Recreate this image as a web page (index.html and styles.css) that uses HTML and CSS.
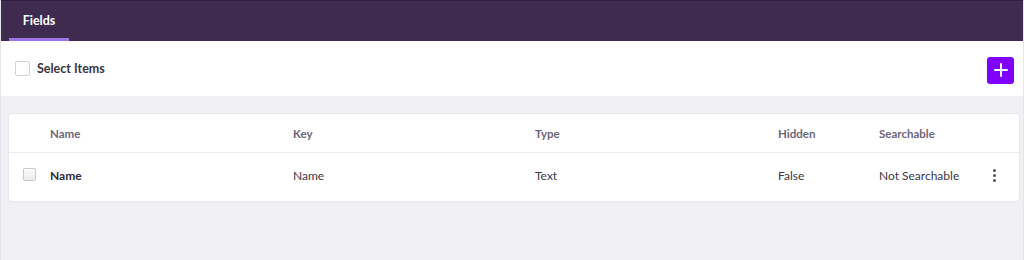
FILE: index.html
```html
<!DOCTYPE html>
<html>
<head>
<meta charset="utf-8">
<link rel="stylesheet" href="styles.css">
</head>
<body>
<div class="app">
  <div class="topbar">
    <div class="tab active">Fields</div>
  </div>
  <div class="toolbar">
    <label class="select-all"><span class="box"></span><span class="select-label">Select Items</span></label>
    <button class="add-btn" aria-label="Add">
      <svg width="14" height="14" viewBox="0 0 14 14"><path d="M7 1v12M1 7h12" stroke="#fff" stroke-width="2" stroke-linecap="round"/></svg>
    </button>
  </div>
  <div class="content">
    <div class="card">
      <div class="row head">
        <div class="c-check"></div>
        <div class="c-name">Name</div>
        <div class="c-key">Key</div>
        <div class="c-type">Type</div>
        <div class="c-hidden">Hidden</div>
        <div class="c-search">Searchable</div>
        <div class="c-menu"></div>
      </div>
      <div class="row body">
        <div class="c-check"><span class="rbox"></span></div>
        <div class="c-name strong">Name</div>
        <div class="c-key">Name</div>
        <div class="c-type">Text</div>
        <div class="c-hidden">False</div>
        <div class="c-search">Not Searchable</div>
        <div class="c-menu"><span class="kebab"><i></i><i></i><i></i></span></div>
      </div>
    </div>
  </div>
</div>
</body>
</html>
```

FILE: styles.css
```css
html, body {
  margin: 0;
  padding: 0;
}
body {
  font-family: Lato, "Noto Sans", "Liberation Sans", sans-serif;
  background: #f0eff4;
  width: 1024px;
  height: 260px;
  overflow: hidden;
}
.app {
  display: flex;
  flex-direction: column;
  height: 260px;
  border-left: 1px solid #e6e5ea;
  border-right: 1px solid #e6e5ea;
  box-sizing: border-box;
}
.topbar {
  background: #3e2b4f;
  height: 41px;
  display: flex;
  align-items: stretch;
  padding-left: 8px;
  border-top: 1px solid #2c1f3a;
  box-sizing: border-box;
}
.tab {
  color: #fff;
  font-weight: 700;
  font-size: 12.5px;
  width: 60px;
  display: flex;
  align-items: center;
  justify-content: center;
  box-sizing: border-box;
  padding-top: 1px;
}
.tab.active {
  border-bottom: 3px solid #a072ea;
}
.toolbar {
  background: #fff;
  height: 55px;
  display: flex;
  align-items: center;
  justify-content: space-between;
  padding: 0 9px 0 14px;
}
.select-all {
  display: flex;
  align-items: center;
  gap: 7px;
  margin-top: -1px;
}
.box {
  width: 13px;
  height: 13px;
  border: 1px solid #d2d0d8;
  border-radius: 2px;
  background: #fff;
}
.select-label {
  font-weight: 700;
  font-size: 12.5px;
  color: #3b3645;
}
.add-btn {
  width: 27px;
  height: 27px;
  border: 0;
  border-radius: 3px;
  background: #8000ff;
  display: flex;
  align-items: center;
  justify-content: center;
  padding: 0;
  margin-top: 3px;
}
.content {
  flex: 1;
  padding: 18px 4px 0 8px;
}
.card {
  background: #fff;
  border-radius: 3px;
  box-shadow: 0 0 0 1px #e8e7ec, 0 1px 2px rgba(0,0,0,0.06);
}
.row {
  display: grid;
  grid-template-columns: 41px 243px 242px 243px 101px 108px 1fr;
  align-items: center;
  font-size: 12px;
  color: #3b3645;
}
.row.head {
  height: 38px;
  border-bottom: 1px solid #ecebf0;
  font-weight: 700;
  font-size: 11.5px;
  color: #6d6579;
}
.row.body {
  height: 48px;
  box-sizing: border-box;
  padding-bottom: 3px;
}
.strong {
  font-weight: 700;
  color: #2e2a36;
}
.c-check {
  display: flex;
  justify-content: flex-start;
  padding-left: 14px;
}
.rbox {
  width: 11px;
  height: 11px;
  border: 1px solid #c9c8cd;
  border-radius: 2px;
  background: linear-gradient(#fafafa, #ececec);
  margin-top: -2px;
}
.c-menu {
  display: flex;
  justify-content: flex-start;
  padding-left: 6px;
}
.kebab {
  display: flex;
  flex-direction: column;
  gap: 2px;
}
.kebab i {
  width: 3px;
  height: 3px;
  background: #55505d;
  border-radius: 50%;
}
```
